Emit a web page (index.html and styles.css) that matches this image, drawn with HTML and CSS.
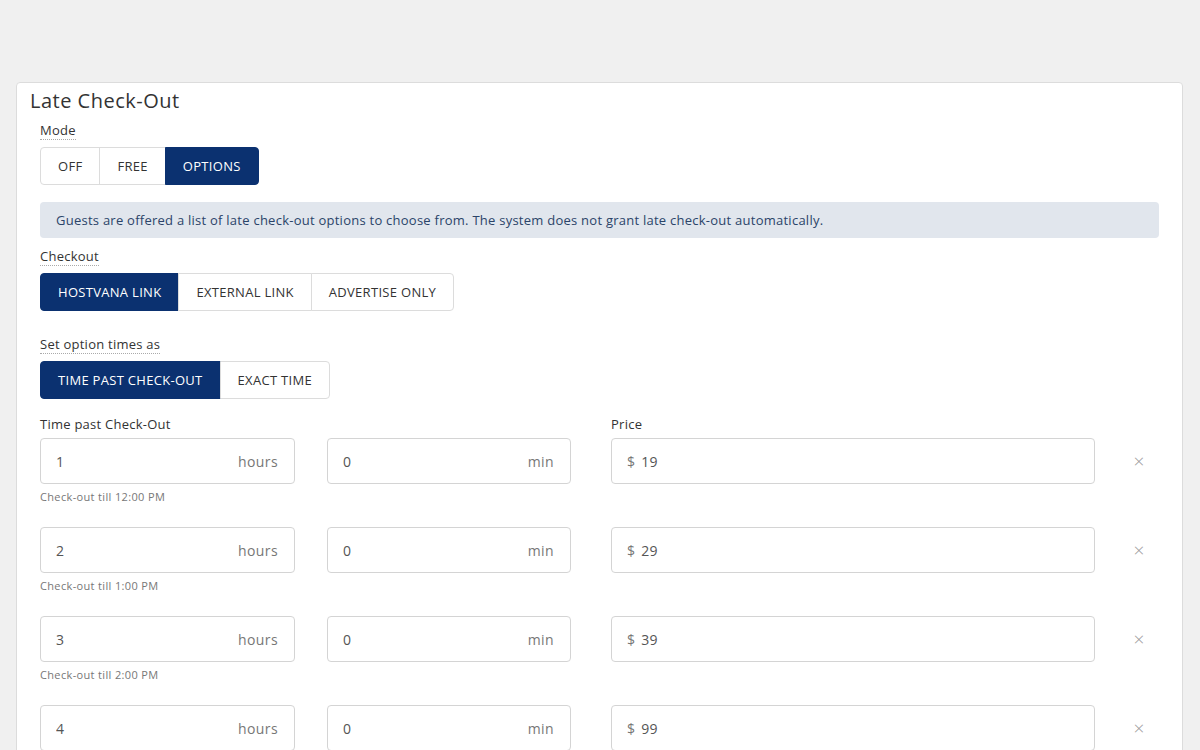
FILE: index.html
```html
<!DOCTYPE html>
<html lang="en">

<head>
    <meta charset="UTF-8" />
    <meta name="viewport" content="width=device-width, initial-scale=1.0" />
    <title>Late Check-Out</title>
    <link rel="stylesheet" href="styles.css">
</head>

<body>

    <div class="card">
        <h2 class="card-title">Late Check-Out</h2>

        <div class="card-body">
            <label class="field-label">Mode</label>
            <div class="btn-group">
                <button class="btn">OFF</button>
                <button class="btn">FREE</button>
                <button class="btn active">OPTIONS</button>
            </div>

            <div class="alert">
                Guests are offered a list of late check-out options to choose from. The system does not grant late check-out automatically.
            </div>

            <label class="field-label">Checkout</label>
            <div class="btn-group">
                <button class="btn active">HOSTVANA LINK</button>
                <button class="btn">EXTERNAL LINK</button>
                <button class="btn">ADVERTISE ONLY</button>
            </div>

            <label class="field-label spaced">Set option times as</label>
            <div class="btn-group">
                <button class="btn active">TIME PAST CHECK-OUT</button>
                <button class="btn">EXACT TIME</button>
            </div>

            <div class="options-head">
                <div class="col-hours">Time past Check-Out</div>
                <div class="col-min"></div>
                <div class="col-price">Price</div>
            </div>

            <div id="optionsList"></div>
        </div>
    </div>

    <script>
        const options = [
            { hours: 1, min: 0, price: 19, till: "12:00 PM" },
            { hours: 2, min: 0, price: 29, till: "1:00 PM" },
            { hours: 3, min: 0, price: 39, till: "2:00 PM" },
            { hours: 4, min: 0, price: 99, till: "3:00 PM" }
        ];

        const list = document.getElementById("optionsList");

        options.forEach(opt => {
            const row = document.createElement("div");
            row.className = "option-row";
            row.innerHTML = `
          <div class="col-hours">
            <div class="input-box">
              <input type="text" value="${opt.hours}">
              <span class="suffix">hours</span>
            </div>
            <div class="hint">Check-out till ${opt.till}</div>
          </div>
          <div class="col-min">
            <div class="input-box">
              <input type="text" value="${opt.min}">
              <span class="suffix">min</span>
            </div>
          </div>
          <div class="col-price">
            <div class="input-box">
              <span class="prefix">$</span>
              <input type="text" value="${opt.price}">
            </div>
          </div>
          <div class="col-remove">
            <span class="remove-btn">&times;</span>
          </div>
        `;
            list.appendChild(row);
        });
    </script>
</body>

</html>
```

FILE: styles.css
```css
body {
    margin: 0;
    padding: 82px 17px 0 16px;
    font-family: 'Open Sans', sans-serif;
    font-size: 13px;
    letter-spacing: 0.25px;
    color: #333;
    background-color: #f0f0f0;
    height: 750px;
    box-sizing: border-box;
    overflow: hidden;
}

.card {
    background: #fff;
    border: 1px solid #dcdcdc;
    border-radius: 4px;
    padding: 5px 0 0;
    min-height: 700px;
}

.card-title {
    margin: 0 0 7px 13px;
    font-size: 20px;
    font-weight: 400;
    letter-spacing: 0.5px;
    line-height: 26px;
    color: #333;
}

.card-body {
    padding: 0 23px;
}

.field-label {
    display: inline-block;
    line-height: 17px;
    border-bottom: 1px dotted #aaa;
    margin-bottom: 7px;
}

.field-label.spaced {
    margin-top: 25px;
}

.btn-group {
    display: flex;
}

.btn {
    height: 38px;
    padding: 0 17px;
    font-family: inherit;
    font-size: 13px;
    letter-spacing: 0.3px;
    color: #333;
    background: #fff;
    border: 1px solid #dcdcdc;
    margin-left: -1px;
    cursor: pointer;
}

.btn:first-child {
    margin-left: 0;
    border-radius: 4px 0 0 4px;
}

.btn:last-child {
    border-radius: 0 4px 4px 0;
}

.btn.active {
    background: #0b3170;
    border-color: #0b3170;
    color: #fff;
}

.alert {
    margin: 17px 0 9px;
    padding: 0 16px;
    height: 36px;
    line-height: 36px;
    background: #e1e6ed;
    border-radius: 4px;
    color: #2b4469;
}

.options-head {
    display: flex;
    margin-top: 17px;
    line-height: 17px;
    margin-bottom: 5px;
}

.option-row {
    display: flex;
    margin-bottom: 23px;
}

.col-hours {
    width: 255px;
    margin-right: 32px;
}

.col-min {
    width: 244px;
    margin-right: 40px;
}

.col-price {
    width: 484px;
}

.col-remove {
    flex: 1;
    display: flex;
    justify-content: center;
    align-items: center;
    height: 46px;
    padding-left: 24px;
}

.input-box {
    display: flex;
    align-items: center;
    height: 46px;
    box-sizing: border-box;
    border: 1px solid #d4d4d4;
    border-radius: 4px;
    padding: 0 16px 0 15px;
    font-size: 14px;
    color: #555;
}

.input-box input {
    flex: 1;
    min-width: 0;
    border: none;
    outline: none;
    padding: 0;
    font-family: inherit;
    font-size: 14px;
    letter-spacing: 0.3px;
    color: #555;
    background: transparent;
}

.suffix {
    color: #777;
    letter-spacing: 0.4px;
}

.prefix {
    color: #777;
    margin-right: 6px;
}

.hint {
    margin-top: 6px;
    font-size: 11px;
    letter-spacing: 0.35px;
    color: #777;
    line-height: 14px;
}

.remove-btn {
    font-size: 19px;
    font-weight: 300;
    color: #999;
    cursor: pointer;
}
```
